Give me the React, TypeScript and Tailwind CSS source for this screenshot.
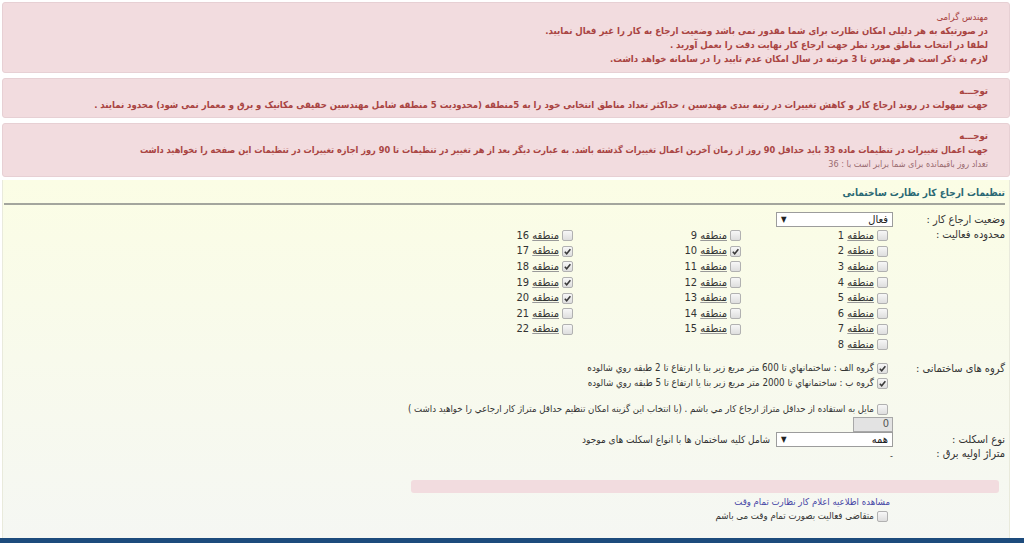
import React from "react";

const danger = "text-[#a94442]";

function Check({ checked = false }: { checked?: boolean }) {
  return (
    <span className="inline-flex h-[11px] w-[11px] shrink-0 items-center justify-center rounded-[2px] border border-[#b1b1b1] bg-linear-to-b from-[#f7f7f7] to-[#dedede]">
      {checked && (
        <svg viewBox="0 0 10 10" className="h-[9px] w-[9px]">
          <path d="M2 5.3 L4.1 7.6 L8.2 2.4" stroke="#3a3a3a" strokeWidth="1.7" fill="none" />
        </svg>
      )}
    </span>
  );
}

function Select({ value }: { value: string }) {
  return (
    <div className="flex h-[15px] w-[117px] shrink-0 items-center justify-between border border-[#9c9c9c] bg-white px-[4px] text-[11px] font-normal leading-none text-[#222]">
      <span>{value}</span>
      <span className="text-[8px]">▼</span>
    </div>
  );
}

const zones: number[][] = [
  [1, 2, 3, 4, 5, 6, 7, 8],
  [9, 10, 11, 12, 13, 14, 15],
  [16, 17, 18, 19, 20, 21, 22],
];
const checkedZones = [10, 17, 18, 19, 20];

function Zone({ n }: { n: number }) {
  return (
    <div className="flex h-[15.6px] items-center gap-[3px] pr-[5px] text-[11px]">
      <Check checked={checkedZones.includes(n)} />
      <span>
        <span className="underline decoration-[#999]">منطقه</span> {n}
      </span>
    </div>
  );
}

function Label({ children }: { children?: React.ReactNode }) {
  return <div className="w-[112px] shrink-0 text-[11px]">{children}</div>;
}

function CheckRow({ checked, text, size }: { checked?: boolean; text: string; size: string }) {
  return (
    <div className={`flex h-[15px] items-center gap-[3px] pr-[5px] ${size}`}>
      <Check checked={checked} />
      <span>{text}</span>
    </div>
  );
}

export default function App() {
  return (
    <div dir="ltr" className="h-[543px] w-[1024px] overflow-hidden bg-white font-['DejaVu_Sans_Condensed','DejaVu_Sans',sans-serif]">
      <div dir="rtl" className="ml-[2px] w-[1008px] pt-[2px]">
        <div className={`rounded-[3px] border border-[#e7d0d4] bg-[#f2dcdf] pr-[21px] pt-[7px] pb-[6px] text-[9.5px] font-bold leading-[14px] ${danger}`}>
          <div className="font-normal">مهندس گرامی</div>
          <div>در صورتیکه به هر دلیلی امکان نظارت برای شما مقدور نمی باشد وضعیت ارجاع به کار را غیر فعال نمایید.</div>
          <div>لطفا در انتخاب مناطق مورد نظر جهت ارجاع کار نهایت دقت را بعمل آورید .</div>
          <div>لازم به ذکر است هر مهندس تا 3 مرتبه در سال امکان عدم تایید را در سامانه خواهد داشت.</div>
        </div>

        <div className={`mt-[5px] rounded-[3px] border border-[#e7d0d4] bg-[#f2dcdf] pr-[21px] pt-[5px] pb-[5px] text-[9.5px] font-bold leading-[14px] ${danger}`}>
          <div>توجـــه</div>
          <div>جهت سهولت در روند ارجاع کار و کاهش تغییرات در رتبه بندی مهندسین ، حداکثر تعداد مناطق انتخابی خود را به 5منطقه (محدودیت 5 منطقه شامل مهندسین حقیقی مکانیک و برق و معمار نمی شود) محدود نمایند .</div>
        </div>

        <div className={`mt-[5px] rounded-[3px] border border-[#e7d0d4] bg-[#f2dcdf] pr-[21px] pt-[5px] pb-[5px] text-[9.5px] leading-[14px] ${danger}`}>
          <div className="font-bold">توجـــه</div>
          <div className="text-[9.15px] font-bold">جهت اعمال تغییرات در تنظیمات ماده 33 باید حداقل 90 روز از زمان آخرین اعمال تغییرات گذشته باشد. به عبارت دیگر بعد از هر تغییر در تنظیمات تا 90 روز اجازه تغییرات در تنظیمات این صفحه را نخواهید داشت</div>
          <div className="text-[9px] text-[#9a6b70]">تعداد روز باقیمانده برای شما برابر است با : 36</div>
        </div>

        <div className="mt-[3px] h-[358px] border-x border-[#e9eadc] bg-linear-to-b from-[#fbfde5] to-[#f5f7f3] pr-[4px] text-[10px] leading-[14px] text-[#333]">
          <div className="ml-[1px] border-b-2 border-[#a3a59d] pt-[6px] pb-[3px] text-[10px] font-bold text-[#2a6874]">
            تنظیمات ارجاع کار نظارت ساختمانی
          </div>

          <div className="mt-[7px] flex h-[15px] items-center">
            <Label>وضعیت ارجاع کار :</Label>
            <Select value="فعال" />
          </div>

          <div className="flex">
            <div className="w-[112px] shrink-0 pt-[1px] text-[11px]">محدوده فعالیت :</div>
            <div className="grid flex-1 grid-cols-[147px_168px_148px] pt-[1px]">
              {zones.map((col, i) => (
                <div key={i}>
                  {col.map((n) => (
                    <Zone key={n} n={n} />
                  ))}
                </div>
              ))}
            </div>
          </div>

          <div className="mt-[8px] flex">
            <div className="w-[112px] shrink-0 pt-[1px] text-[11px]">گروه های ساختمانی :</div>
            <div className="flex-1">
              <CheckRow checked size="text-[9.7px]" text="گروه الف : ساختمانهاي تا 600 متر مربع زير بنا يا ارتفاع تا 2 طبقه روي شالوده" />
              <CheckRow checked size="text-[9.7px]" text="گروه ب : ساختمانهاي تا 2000 متر مربع زير بنا يا ارتفاع تا 5 طبقه روي شالوده" />
            </div>
          </div>

          <div className="mt-[11px] flex">
            <Label />
            <div className="flex-1">
              <CheckRow size="text-[9.6px]" text="مايل به استفاده از حداقل متراژ ارجاع كار مي باشم . (با انتخاب اين گزينه امكان تنظيم حداقل متراژ كار ارجاعي را خواهيد داشت )" />
              <div className="flex h-[15px] w-[40px] items-center border border-[#a8a8a8] bg-[#e3e3e3] pr-[3px] text-[11px] text-[#555]">0</div>
            </div>
          </div>

          <div className="mt-[1px] flex h-[14px] items-center">
            <Label>نوع اسکلت :</Label>
            <Select value="همه" />
            <span className="mr-[6px]">شامل کلیه ساختمان ها با انواع اسکلت های موجود</span>
          </div>

          <div className="flex h-[14px] items-center">
            <Label>متراژ اولیه برق :</Label>
            <span className="pt-[4px] text-[9px]">-</span>
          </div>

          <div className="mt-[19px] mr-[6px] h-[13px] w-[588px] rounded-[3px] bg-[#f2dcdf]" />

          <div className="mt-[2px] flex h-[14px] items-center">
            <div className="w-[115px] shrink-0" />
            <span className="text-[9.5px] text-[#4646a6]">مشاهده اطلاعیه اعلام کار نظارت تمام وقت</span>
          </div>
          <div className="flex">
            <Label />
            <div className="flex-1">
              <CheckRow size="text-[9.6px]" text="متقاضی فعالیت بصورت تمام وقت می باشم" />
            </div>
          </div>
        </div>
      </div>
      <div className="h-[5px] w-full bg-[#1d4b7c]" />
    </div>
  );
}
